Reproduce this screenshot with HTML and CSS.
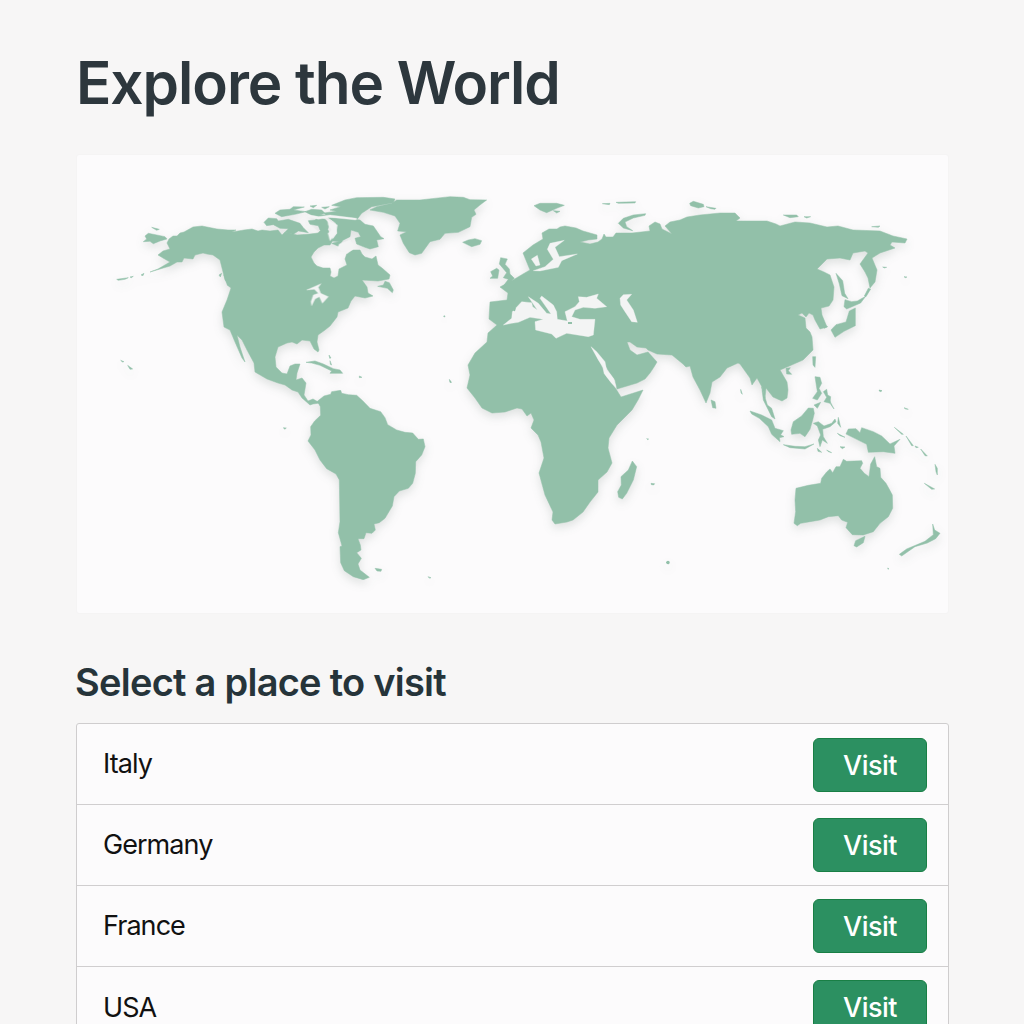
FILE: index.html
```html
<!DOCTYPE html>
<html lang="en">
<head>
<meta charset="utf-8">
<title>Explore the World</title>
<link rel="stylesheet" href="styles.css">
</head>
<body>
<main class="page">
  <h1 class="title">Explore the World</h1>
  <figure class="map-card">
    <svg class="map" viewBox="77 155 872 458" role="img" aria-label="World map">
      <g class="land">
        <!-- North and Central America -->
        <path class="mass" d="M167 243L169 239L173 236L177 236L180 233L184 232L193 227L202 226L217 229L228 230L236 230L232 232L244 230L252 229L258 231L262 230L270 231L278 230L282 235L285 232L297 235L310 234L318 233L321 230L328 230L333 240L330 245L324 245L318 248L314 252L311 257L314 263L317 266L323 268L330 268L331 272L330 276L334 278L338 276L339 269L347 265L345 259L347 253L353 250L360 250L362 254L365 257L372 259L376 256L378 265L382 268L390 275L389 279L378 281L362 280L367 287L368 293L373 296L365 298L355 296L351 301L348 308L338 312L337 317L330 326L325 330L318 335L317 342L319 350L318 352L314 349L310 341L302 340L297 344L292 342L287 343L278 347L275 357L276 367L282 373L287 374L290 366L295 364L300 364L297 373L296 380L302 378L306 383L304 395L308 401L313 399L320 403L313 404L310 405L302 398L298 392L292 390L285 385L278 383L267 379L255 372L254 363L247 350L242 340L237 335L240 347L245 362L242 358L235 342L230 330L224 327L222 312L227 300L231 288L225 280L222 268L220 260L213 255L207 254L203 253L195 255L193 259L184 258L182 262L177 262L170 266L150 272L158 269L170 262L163 258L158 255L163 251L170 249Z"/>
        <!-- Canadian Arctic, Greenland, Caribbean -->
        <g transform="translate(250 180) scale(.33333)">
          <path d="M245 76L285 60L320 53L400 52L435 57L430 68L365 80L335 100L322 117L270 110L230 108L222 99L260 94L240 90L272 80Z"/>
          <path d="M240 115L290 115L330 120L345 133L370 138L385 160L392 170L402 176L380 180L385 200L360 207L345 202L320 192L315 175L332 170L325 157L303 150L300 170L270 185L245 183L262 160L258 130Z"/>
          <path d="M42 127L55 114L80 116L85 123L115 118L150 130L160 143L175 158L145 153L130 163L105 157L115 146L90 145L70 134L50 137Z"/>
          <path d="M75 100L90 90L120 88L130 80L163 81L130 90L168 95L135 103L95 110ZM165 95L185 88L215 90L225 100L210 105L240 104L225 112L185 106ZM175 122L195 120L205 112L225 118L238 130L232 155L210 150L205 137L180 133ZM180 78L200 76L190 83ZM215 82L238 80L225 87ZM235 113L260 115L250 122Z"/>
          <path d="M245 190L278 182L270 192L300 190L270 201Z"/>
          <path d="M360 90L380 80L425 70L440 60L510 60L600 50L640 52L660 59L710 60L690 75L672 90L678 103L665 112L660 140L625 157L585 160L570 178L540 185L515 220L495 225L478 218L460 190L450 165L470 155L443 153L450 130L435 108L400 97Z"/>
          <path d="M638 187L655 180L675 176L695 182L690 193L665 200Z"/>
          <path d="M383 319L400 315L405 304L418 308L430 330L427 338L412 325Z"/>
          <path d="M168 547L195 543L220 552L250 566L270 570L278 580L240 580L245 573L210 556L185 549ZM237 525L243 534L239 535ZM240 542L245 555L241 553ZM328 588L336 592L328 593Z"/>
          <circle cx="583" cy="409" r="2"/><path d="M598 598L604 607L600 607Z"/>
        </g>
        <!-- Chukotka tip, Aleutians, Hawaii -->
        <g transform="translate(70 180) scale(.33333)">
          <path d="M220 185L230 177L225 168L235 160L260 165L285 170L291 177L270 183L250 191L240 184ZM245 142L268 148L260 151ZM213 285L222 280L219 287ZM140 298L175 293L165 298L145 301ZM180 291L190 289L184 293ZM152 541L162 545L157 546ZM173 556L188 567L180 568ZM447 285L455 280L451 291ZM462 285L477 305L481 322L472 316Z"/>
        </g>
        <!-- South America -->
        <g transform="translate(280 370) scale(.33333)">
          <path d="M112 94L132 78L152 73L155 65L182 61L185 70L205 74L230 76L248 92L270 115L302 125L315 143L323 164L350 180L375 187L398 189L415 208L430 207L435 230L425 255L407 275L406 310L398 340L385 355L358 363L342 380L337 408L315 445L298 458L282 462L286 480L276 490L258 488L252 506L234 506L241 525L243 540L230 548L244 565L234 582L240 600L268 622L250 629L220 620L193 602L182 578L180 530L186 528L175 488L180 455L178 330L168 312L140 296L120 270L105 240L84 213L93 195L92 170L104 153L122 136L121 110Z"/>
          <path d="M285 595L305 598L303 604L291 603ZM444 620L453 623L449 625ZM10 173L19 174L14 178Z"/>
        </g>
        <!-- Europe, Asia and Africa -->
        <path class="mass" d="M523 253L533 245L543 239L542 233L549 229L557 229L560 227L565 226L576 228L583 231L597 235L597 239L588 240L580 242L590 244L598 242L602 239L604 234L606 237L613 237L616 233L632 233L650 231L649 226L655 222L660 224L662 229L672 234L665 226L670 222L680 220L687 217L700 215L720 213L735 213L740 218L736 221L767 221L776 224L780 226L795 222L810 223L827 227L838 226L853 230L880 231L893 236L907 239L905 243L892 242L890 245L895 248L880 253L872 258L877 270L875 282L870 288L868 278L865 272L860 264L868 253L865 251L853 253L850 260L840 258L827 259L817 269L824 272L830 275L834 287L833 300L829 306L821 308L822 315L827 327L820 329L815 320L813 315L809 313L806 317L802 313L798 315L805 318L806 328L810 332L812 337L813 350L803 360L787 367L780 370L787 382L788 390L787 398L782 401L773 397L766 388L765 398L762 387L757 378L752 385L750 378L745 371L740 364L738 363L727 368L720 377L712 382L710 393L706 403L700 390L693 377L690 366L686 367L683 364L672 355L657 354L648 350L646 348L637 347L630 342L627 342L630 350L637 355L648 352L657 362L654 367L650 373L645 379L637 383L617 389L615 380L608 370L600 357L592 347L597 357L602 367L605 375L616 389L621 397L643 390L638 400L632 410L617 425L609 438L608 448L612 463L607 472L598 480L598 492L590 502L583 512L573 520L567 522L555 524L552 520L553 512L545 495L539 473L544 458L541 442L538 435L531 428L534 420L531 413L527 416L522 409L517 408L505 412L492 413L482 408L475 398L467 388L470 375L468 365L475 353L487 342L488 333L497 325L489 319L490 302L507 300L508 293L500 287L513 280L523 274L530 270Z"/>
        <!-- European islands and Madagascar -->
        <g transform="translate(450 190) scale(.33333)">
          <path d="M160 288L175 268L160 263L170 248L148 222L152 203L172 207L165 223L178 237L180 252L193 265L180 278ZM120 265L128 258L122 245L140 235L147 240L143 265ZM252 47L270 40L320 40L343 46L320 55L290 68L270 60ZM310 62L330 64L320 69ZM457 41L480 40L478 44ZM498 37L557 35L555 39L505 40ZM505 100L520 85L550 75L587 71L585 76L550 84L525 96L530 110L548 122L520 114ZM0 572L4 577L0 577Z"/>
        </g>
        <g transform="translate(450 360) scale(.33333)">
          <path d="M547 303L560 320L550 360L530 400L517 417L506 412L503 395L514 375L513 350L535 330ZM603 370L614 371L611 375L604 374ZM648 607L656 607L655 612ZM590 236L596 237L593 239Z"/>
        </g>
        <!-- Siberian islands, Japan, Sri Lanka -->
        <g transform="translate(620 190) scale(.33333)">
          <path d="M209 40L220 34L250 43L252 50L235 54L212 47ZM258 50L288 55L285 58L272 56ZM490 75L530 75L535 80L510 83ZM552 80L572 80L560 84ZM755 110L780 108L775 112Z"/>
          <path d="M648 250L668 272L674 310L684 326L666 317L658 282ZM675 329L695 335L712 333L737 319L722 339L680 357L672 350ZM688 363L706 354L706 407L672 424L645 442L633 420L648 404L678 396ZM745 295L752 297L738 320L733 318ZM610 405L623 410L612 415ZM273 630L285 635L288 655L278 653ZM498 535L511 533L505 542L515 553L500 552ZM777 600L785 602L779 604ZM788 231L800 232L793 234ZM852 260L861 261L856 263Z"/>
        </g>
        <!-- South-East Asia and Oceania -->
        <g transform="translate(730 340) scale(.33333)">
          <path d="M198 445L235 436L272 430L275 415L290 396L300 387L308 398L318 380L330 380L340 358L350 364L395 362L398 370L390 385L403 400L417 410L422 372L434 350L440 380L450 385L452 412L468 430L478 448L487 465L488 505L475 530L450 550L430 575L400 585L367 584L348 563L353 547L335 540L325 527L295 530L270 540L240 545L212 550L202 557L192 550L197 515L195 480Z"/>
          <path d="M372 617L377 602L405 589L400 608L380 621ZM508 643L530 627L585 604L610 584L608 552L614 570L630 580L617 596L592 609L555 620L515 648Z"/>
          <path d="M183 270L190 245L215 228L235 204L250 205L253 220L248 240L240 268L225 290L210 280L185 283ZM60 213L65 222L88 235L115 260L125 283L150 305L148 293L162 290L152 284L160 272L135 265L125 240L95 225ZM95 140L100 180L125 230L135 237L125 205L112 195L103 165ZM160 314L195 319L225 320L252 312L225 327L180 323ZM265 245L282 258L305 250L315 237L318 245L300 260L278 268L280 290L292 310L277 300L270 320L265 300L272 285L262 258L250 250Z"/>
          <path d="M348 282L355 267L378 266L390 278L395 263L430 275L455 288L480 312L510 298L492 318L495 340L460 335L415 337L410 313L380 298ZM325 232L332 262L323 250ZM322 280L345 292L330 287ZM248 50L257 50L255 82L249 75ZM255 110L270 112L275 130L267 145L275 160L262 180L248 175L262 155ZM280 155L290 148L293 165L302 170L300 190L282 185L290 172ZM252 195L272 187L262 205ZM298 180L312 207L302 193ZM32 148L37 163L33 158Z"/>
          <path d="M493 262L520 283L515 283ZM528 288L550 317L545 317ZM572 327L592 348L585 347ZM583 430L614 447L605 448ZM615 373L622 385L622 405L618 395ZM555 318L565 322L558 323ZM522 203L535 208L526 207ZM447 151L456 152L452 155ZM330 320L345 321L337 326ZM262 325L275 337L264 334ZM290 330L305 338L295 335ZM473 684L477 686L474 688Z"/>
        </g>
        <circle cx="668" cy="562.5" r="1"/>
      </g>
      <!-- Inland seas and lakes -->
      <g class="water" transform="translate(450 190) scale(.33333)">
        <path d="M160 405L185 385L187 365L215 335L245 338L248 350L262 360L235 320L265 340L290 370L303 372L270 325L275 318L310 345L320 365L322 388L352 393L345 365L375 350L388 335L385 320L410 322L445 312L440 325L470 350L435 355L400 352L375 360L365 380L390 388L435 388L430 435L415 440L350 430L318 445L305 432L257 420L255 395L280 388L240 382L205 397L185 400Z"/>
        <path d="M250 242L285 230L310 208L292 178L300 160L343 151L315 172L328 200L382 192L335 212L325 232L270 243ZM244 207L262 196L270 225L258 228ZM510 325L520 314L545 313L530 330L550 360L562 397L545 395L525 365L512 345Z"/>
        <path d="M423 470L440 485L465 515L470 540L490 565L498 592L485 580L462 550L460 532L445 510Z"/>
      </g>
      <g class="water" transform="translate(250 180) scale(.33333)">
        <path d="M170 330L213 311L205 322L212 340L235 350L217 370L208 350L195 357L185 377L183 365L190 345L205 340L193 328Z"/>
        <path d="M232 118L242 125L262 135L258 160L240 182L234 160L245 150L235 135ZM170 103L205 110L240 105L320 115L318 120L240 112L205 118L172 110ZM165 125L180 135L205 155L190 158L172 143ZM268 192L300 180L312 205L290 222L262 205Z"/>
      </g>
      <path class="land-detail" d="M512 306L513 304M514 311L515 308M568 323L572 323"/>
    </svg>
  </figure>
  <h2 class="subtitle">Select a place to visit</h2>
  <ul class="places">
    <li class="place"><span class="name">Italy</span><button class="visit">Visit</button></li>
    <li class="place"><span class="name">Germany</span><button class="visit">Visit</button></li>
    <li class="place"><span class="name">France</span><button class="visit">Visit</button></li>
    <li class="place"><span class="name">USA</span><button class="visit">Visit</button></li>
  </ul>
</main>
</body>
</html>
```
FILE: styles.css
```css
* { box-sizing: border-box; }
body {
  margin: 0;
  height: 1024px;
  overflow: hidden;
  background: #f7f6f6;
  font-family: Inter, "Liberation Sans", sans-serif;
}
.page { padding: 47px 75px 0 76px; }
.title {
  margin: 0 0 36px;
  font-size: 58.5px;
  line-height: 71px;
  font-weight: 600;
  letter-spacing: -1.05px;
  color: #2d373d;
}
.map-card {
  margin: 0;
  height: 460px;
  border: 1px solid #f5f4f4;
  border-radius: 3px;
  background: #fcfbfc;
}
.map { display: block; width: 872px; height: 458px; }
.land {
  fill: #92c0a9;
  stroke: #92c0a9;
  stroke-width: 1.5;
  stroke-linejoin: round;
  filter: drop-shadow(0 4px 5px rgba(40, 70, 55, .14));
}
.land .mass { stroke-width: .5; }
.water {
  fill: #f3f4f4;
  stroke: #f3f4f4;
  stroke-width: 1;
  stroke-linejoin: round;
}
.land-detail { fill: none; stroke: #92c0a9; stroke-width: 2; }
.subtitle {
  margin: 45px 0 17px -1px;
  font-size: 38px;
  line-height: 47px;
  font-weight: 600;
  letter-spacing: -.74px;
  color: #26343a;
}
.places {
  margin: 0;
  padding: 0;
  list-style: none;
  border: 1px solid #cfcdce;
  border-radius: 3px;
  background: #fcfbfc;
}
.place {
  display: flex;
  align-items: center;
  justify-content: space-between;
  height: 81px;
  padding: 0 21px 0 26px;
  border-bottom: 1px solid #d0cecf;
}
.place:last-child { border-bottom: 0; }
.name {
  font-size: 27px;
  line-height: 34px;
  letter-spacing: -.95px;
  color: #111;
}
.visit {
  width: 114px;
  height: 54px;
  padding: 2px 0 0;
  border: 1px solid #197f45;
  border-radius: 6px;
  background: #2c9061;
  color: #fff;
  font: 500 27px/34px Inter, "Liberation Sans", sans-serif;
  letter-spacing: -.5px;
}
.place:first-child .visit { margin-top: 1px; }
.place:last-child .visit { margin-bottom: 2px; }
```
